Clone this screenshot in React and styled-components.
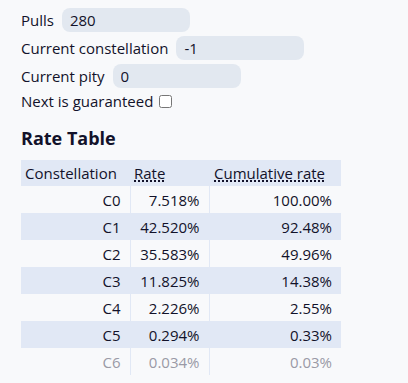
import React from "react";
import styled, { createGlobalStyle } from "styled-components";

const Global = createGlobalStyle`
  html, body { margin: 0; padding: 0; background: #f8f9fb; }
  body { font-family: "Open Sans", "Noto Sans", sans-serif; color: #12122a; font-size: 16px; }
`;

const Page = styled.div`
  padding: 8px 21px 0 21px;
`;

const Form = styled.div`
  display: flex;
  flex-direction: column;
  gap: 4px;
`;

const Field = styled.label`
  display: flex;
  align-items: center;
  height: 24px;
  gap: 8px;
  font-size: 15px;
`;

const Input = styled.input`
  box-sizing: border-box;
  width: 128px;
  height: 24px;
  border: none;
  border-radius: 8px;
  background: #e2e8f0;
  padding: 0 8px;
  font: inherit;
  color: inherit;
  outline: none;
`;

const CheckRow = styled.label`
  display: flex;
  align-items: center;
  height: 18px;
  font-size: 15px;
  input { margin: 0 0 0 6px; width: 13px; height: 13px; }
`;

const Heading = styled.h3`
  font-size: 18px;
  font-weight: 700;
  margin: 16px 0 0 0;
  height: 34px;
  line-height: 24px;
`;

const Table = styled.table`
  border-collapse: collapse;
  width: 320px;
  font-size: 15px;
  table-layout: fixed;
`;

const Th = styled.th`
  background: #e1e8f5;
  text-align: left;
  font-weight: 400;
  height: 26px;
  padding: 0 0 0 ${(p) => p.$pl || 4}px;
  box-sizing: border-box;
  abbr { text-decoration: underline dotted; text-decoration-thickness: 2px; text-underline-offset: 1px; }
`;

const Tr = styled.tr`
  background: ${(p) => (p.$striped ? "#e1e8f5" : "transparent")};
  color: ${(p) => (p.$faded ? "#9a9aa6" : "inherit")};
`;

const Td = styled.td`
  text-align: right;
  height: 27px;
  padding: 0 9px 0 0;
  box-sizing: border-box;
  & + & { border-left: 1px solid ${(p) => (p.$striped ? "#e1e8f5" : "#e4e5ea")}; }
`;

const rows = [
  ["C0", "7.518%", "100.00%"],
  ["C1", "42.520%", "92.48%"],
  ["C2", "35.583%", "49.96%"],
  ["C3", "11.825%", "14.38%"],
  ["C4", "2.226%", "2.55%"],
  ["C5", "0.294%", "0.33%"],
  ["C6", "0.034%", "0.03%"],
];

export default function App() {
  return (
    <Page>
      <Global />
      <Form>
        <Field>Pulls<Input defaultValue="280" /></Field>
        <Field>Current constellation<Input defaultValue="-1" /></Field>
        <Field>Current pity<Input defaultValue="0" /></Field>
        <CheckRow>Next is guaranteed<input type="checkbox" /></CheckRow>
      </Form>
      <Heading>Rate Table</Heading>
      <Table>
        <colgroup>
          <col style={{ width: 109 }} />
          <col style={{ width: 79 }} />
          <col style={{ width: 132 }} />
        </colgroup>
        <thead>
          <tr>
            <Th>Constellation</Th>
            <Th><abbr>Rate</abbr></Th>
            <Th $pl={5}><abbr>Cumulative rate</abbr></Th>
          </tr>
        </thead>
        <tbody>
          {rows.map((r, i) => (
            <Tr key={r[0]} $striped={i % 2 === 1} $faded={i === 6}>
              {r.map((c, j) => (
                <Td key={j} $striped={i % 2 === 1}>{c}</Td>
              ))}
            </Tr>
          ))}
        </tbody>
      </Table>
    </Page>
  );
}
